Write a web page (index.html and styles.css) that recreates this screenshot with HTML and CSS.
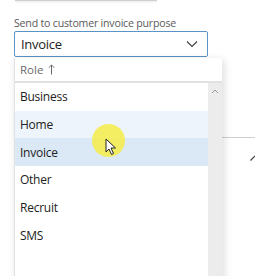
FILE: index.html
```html
<!DOCTYPE html>
<html>
<head>
<meta charset="utf-8">
<link rel="stylesheet" href="styles.css">
</head>
<body>
<div class="page">
  <div class="topline"></div>
  <div class="field">
    <div class="label">Send to customer invoice purpose</div>
    <div class="select">
      <span class="value">Invoice</span>
      <svg class="chev" width="12" height="8" viewBox="0 0 12 8"><path d="M1 1.5 L6 6.5 L11 1.5" fill="none" stroke="#444" stroke-width="1.2"/></svg>
    </div>
  </div>
  <div class="bgline"></div>
  <svg class="bgicon" width="6" height="6" viewBox="0 0 6 6"><path d="M0.5 5.5 L5 1" fill="none" stroke="#444" stroke-width="1.2"/></svg>

  <div class="dropdown">
    <div class="head"><span>Role</span><svg class="arrow" width="7" height="11" viewBox="0 0 7 11"><path d="M3.5 10.5 V1 M0.8 3.7 L3.5 1 L6.2 3.7" fill="none" stroke="#6a6a6a" stroke-width="1"/></svg></div>
    <div class="body">
      <ul class="list">
        <li>Business</li>
        <li class="hover">Home</li>
        <li class="sel">Invoice</li>
        <li>Other</li>
        <li>Recruit</li>
        <li>SMS</li>
      </ul>
      <div class="scroll">
        <svg width="8" height="5" viewBox="0 0 8 5"><path d="M1 4 L4 1 L7 4" fill="none" stroke="#999" stroke-width="1"/></svg>
        <svg width="8" height="5" viewBox="0 0 8 5"><path d="M1 1 L4 4 L7 1" fill="none" stroke="#999" stroke-width="1"/></svg>
      </div>
    </div>
  </div>

  <div class="spot"></div>
  <svg class="cursor" width="12" height="18" viewBox="0 0 12 18"><path d="M1 1 L1 14 L4 11 L6.5 16.5 L8.5 15.5 L6 10 L10.5 10 Z" fill="#fff" stroke="#222" stroke-width="1"/></svg>
</div>
</body>
</html>
```

FILE: styles.css
```css
* { box-sizing: border-box; }
html, body { margin: 0; padding: 0; background: #fff; }
body {
  font-family: "Open Sans", "Noto Sans", sans-serif;
  width: 255px;
  height: 276px;
  overflow: hidden;
}
.page { position: relative; width: 255px; height: 276px; }
.topline {
  margin-left: 15px;
  width: 142px;
  height: 1px;
  background: #cfcfcf;
  box-shadow: 0 1px 2px rgba(0,0,0,0.12);
}
.field { padding: 14px 0 0 14px; }
.label {
  font-size: 10.6px;
  color: #5a5a5a;
  line-height: 16px;
  letter-spacing: -0.2px;
}
.select {
  width: 194px;
  height: 26px;
  border: 1px solid #5b93c4;
  border-radius: 2px;
  display: flex;
  align-items: center;
  justify-content: space-between;
  padding: 0 9px 0 6px;
}
.value { font-size: 13px; color: #222; letter-spacing: -0.3px; }
.bgline {
  position: absolute;
  left: 222px; top: 137px;
  width: 33px; height: 1px;
  background: #cfcfcf;
}
.bgicon {
  position: absolute;
  left: 250px; top: 155px;
}
.dropdown {
  position: absolute;
  left: 14px; top: 58px;
  width: 208px;
  height: 230px;
  background: #fff;
  border-left: 1px solid #e2e2e2;
  box-shadow: 2px 2px 8px rgba(0,0,0,0.14);
}
.head {
  height: 25px;
  display: flex;
  align-items: center;
  gap: 5px;
  padding-left: 5px;
  font-size: 11.5px;
  color: #6a6a6a;
  border-bottom: 2px solid #e1e1e1;
}
.head .arrow { margin-top: -1px; }
.body { display: flex; height: 203px; }
.list {
  list-style: none;
  margin: 0; padding: 0;
  flex: 1;
}
.list li {
  height: 27.7px;
  display: flex;
  align-items: center;
  padding-left: 5px;
  font-size: 12px;
  color: #222;
  letter-spacing: -0.25px;
}
.list li.hover { background: #eef4fb; }
.list li.sel { background: #dbe8f6; }
.scroll {
  width: 14px;
  background: #ececec;
  display: flex;
  flex-direction: column;
  justify-content: space-between;
  align-items: center;
  padding: 6px 0 6px;
}
.spot {
  position: absolute;
  left: 92px; top: 124px;
  width: 33px; height: 33px;
  border-radius: 50%;
  background: rgba(245, 236, 70, 0.85);
}
.cursor {
  position: absolute;
  left: 105px; top: 138px;
}
```
